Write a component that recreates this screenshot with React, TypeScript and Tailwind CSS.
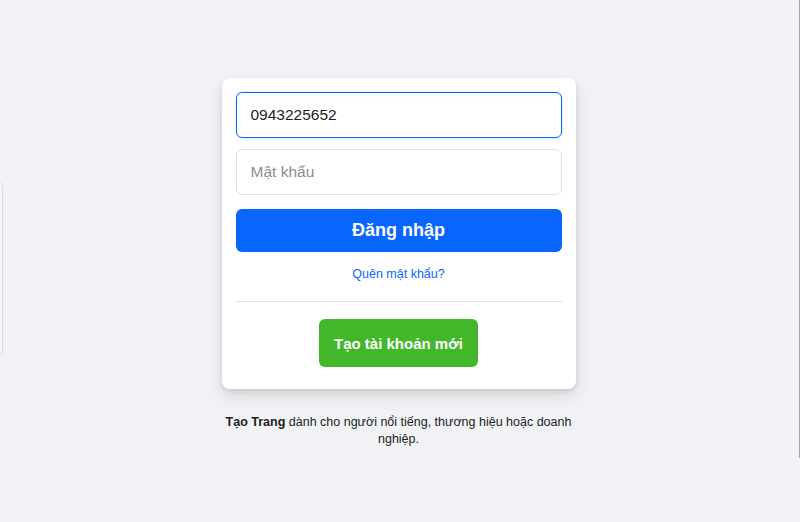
import { useState } from "react";

export default function App() {
  const [phone, setPhone] = useState("0943225652");
  const [password, setPassword] = useState("");

  return (
    <div
      className="relative min-h-[522px] overflow-hidden bg-[#f1f2f5] text-[#1c1e21]"
      style={{ fontFamily: '"Liberation Sans", Arial, sans-serif' }}
    >
      {/* left card edge, mostly off screen */}
      <div className="absolute left-[-300px] top-[180px] h-[179px] w-[303px] rounded-lg border border-[#dadde1] bg-[#f4f5f8]" />
      {/* right edge line */}
      <div className="absolute right-0 top-0 h-[458px] w-px bg-[#a8a8a8]" />

      <div className="flex flex-col items-center pt-[78px] pr-[3px]">
        {/* Login card */}
        <div className="w-[354px] rounded-lg bg-white px-[14px] pt-[14px] pb-[22px] shadow-[0_2px_4px_rgba(0,0,0,0.1),0_8px_16px_rgba(0,0,0,0.1)]">
          <form
            className="flex flex-col"
            onSubmit={(e) => e.preventDefault()}
          >
            <input
              value={phone}
              onChange={(e) => setPhone(e.target.value)}
              className="h-[46px] w-full rounded-md border border-[#0866ff] px-[14px] text-[15.5px] text-[#1c1e21] outline-none shadow-[0_0_0_1px_#e7f3ff]"
            />
            <input
              type="password"
              value={password}
              onChange={(e) => setPassword(e.target.value)}
              placeholder="Mật khẩu"
              className="mt-[11px] h-[46px] w-full rounded-md border border-[#dddfe2] px-[14px] text-[15.5px] text-[#1c1e21] outline-none placeholder:text-[#8a8d91]"
            />
            <button
              type="submit"
              className="mt-[14px] h-[43px] w-full rounded-md bg-[#0866ff] text-[18px] font-bold text-white"
            >
              Đăng nhập
            </button>
          </form>

          <div className="mt-[9px] text-center">
            <a href="#" className="text-[12.5px] text-[#0866ff]">
              Quên mật khẩu?
            </a>
          </div>

          <div className="mt-[16px] border-b border-[#dadde1]" />

          <div className="mt-[17px] flex justify-center">
            <button className="h-[48px] w-[159px] rounded-md bg-[#42b72a] pt-[3px] text-[15px] font-bold text-white">
              Tạo tài khoản mới
            </button>
          </div>
        </div>

        {/* Footer note */}
        <p className="mt-[25px] w-[354px] text-center text-[12.5px] leading-[17px] text-[#1c1e21]">
          <a href="#" className="font-bold">
            Tạo Trang
          </a>{" "}
          dành cho người nổi tiếng, thương hiệu hoặc doanh nghiệp.
        </p>
      </div>
    </div>
  );
}
